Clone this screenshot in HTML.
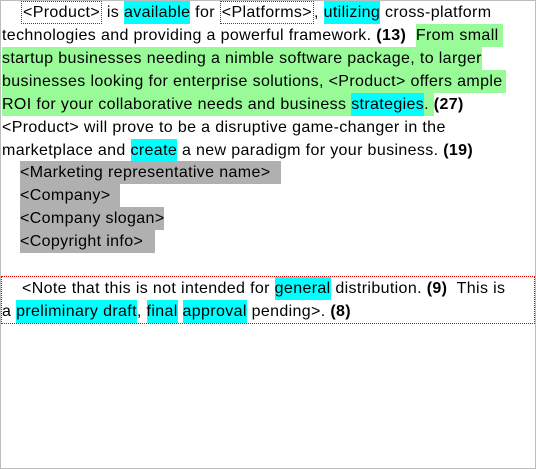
<!DOCTYPE html>
<html><head><style>
html,body{margin:0;padding:0}
body{width:536px;height:469px;position:relative;overflow:hidden;background:#fff;font-family:"Liberation Sans",sans-serif;font-size:16px;letter-spacing:0.36px;color:#000}
.frame{position:absolute;left:0;top:0;width:534px;height:467px;border:1px solid #bdbdbd}
.l{position:absolute;left:2px;height:23px;line-height:23px;white-space:nowrap}
.c{background:#00ffff;display:inline-block;height:23px}
.g{background:#98fb98}
.gy{background:#b0b0b0;display:inline-block;height:23px}
.d{border:1px dotted #e00;box-sizing:border-box;display:inline-block;height:23px;line-height:21px;padding:0 1px}
b{font-weight:bold}
.note{position:absolute;left:1px;top:276px;width:532px;height:46px;border:1px dotted #e00}
</style></head><body>
<div class="frame"></div>
<div class="l" style="top:1px;left:21px"><span class="d">&lt;Product&gt;</span> is <span class="c">available</span> for <span class="d">&lt;Platforms&gt;</span>, <span class="c">utilizing</span> cross-platform</div>
<div class="l" style="top:24px">technologies and providing a powerful framework. <b>(13)</b>&nbsp; <span class="g" style="display:inline-block;height:23px;padding-right:4px">From small</span></div>
<div class="l g" style="top:47px;width:480px">startup businesses needing a nimble software package, to larger</div>
<div class="l g" style="top:70px;width:504px;left:2px">businesses looking for enterprise solutions, &lt;Product&gt; offers ample</div>
<div class="l" style="top:93px"><span class="g" style="display:inline-block;height:23px">ROI for your collaborative needs and business <span class="c">strategies</span>.&nbsp;</span><b>(27)</b></div>
<div class="l" style="top:116px">&lt;Product&gt; will prove to be a disruptive game-changer in the</div>
<div class="l" style="top:139px">marketplace and <span class="c">create</span> a new paradigm for your business. <b>(19)</b></div>
<div class="l" style="top:161px;left:20px"><span class="gy" style="width:261px">&lt;Marketing representative name&gt;</span></div>
<div class="l" style="top:184px;left:20px"><span class="gy" style="width:100px">&lt;Company&gt;</span></div>
<div class="l" style="top:207px;left:20px"><span class="gy" style="width:144px">&lt;Company slogan&gt;</span></div>
<div class="l" style="top:230px;left:20px"><span class="gy" style="width:135px">&lt;Copyright info&gt;</span></div>
<div class="note"></div>
<div class="l" style="top:277px;left:22px">&lt;Note that this is not intended for <span class="c">general</span> distribution. <b>(9)</b>&nbsp; This is</div>
<div class="l" style="top:300px">a <span class="c">preliminary draft</span>, <span class="c">final</span> <span class="c">approval</span> pending&gt;. <b>(8)</b></div>
</body></html>
